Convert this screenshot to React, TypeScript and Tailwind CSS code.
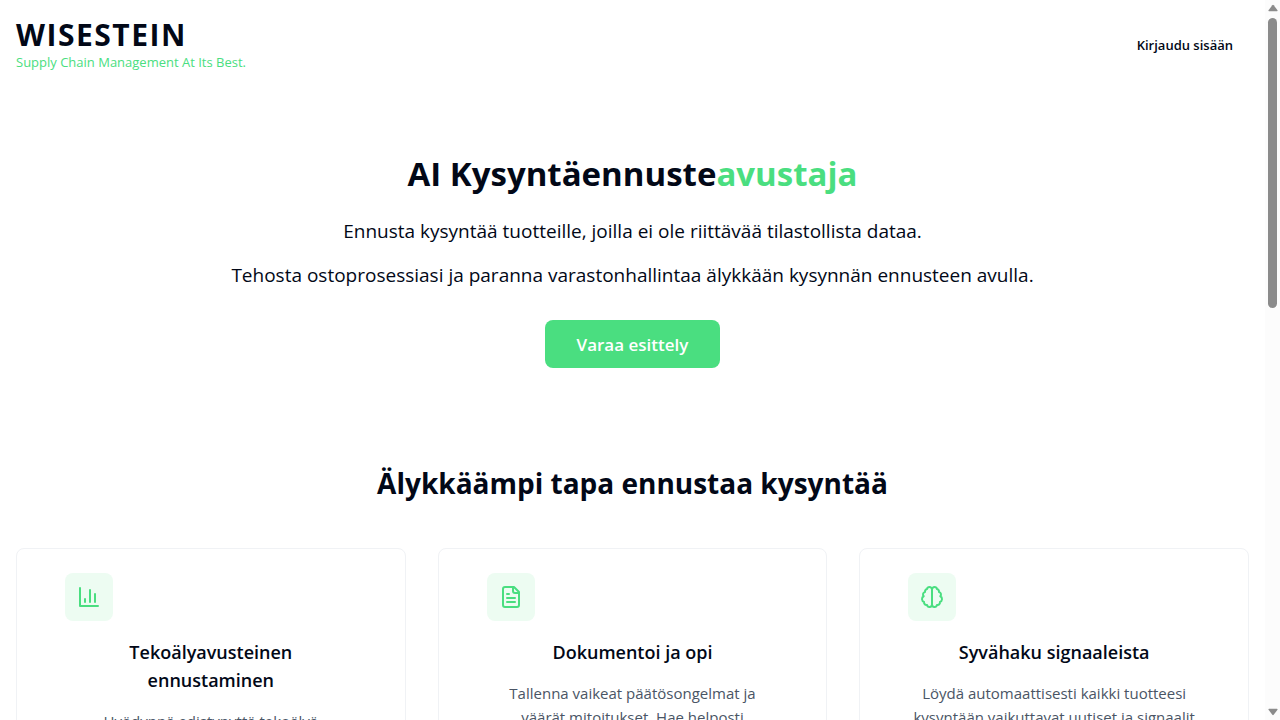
import type { ReactNode } from "react";

function Icon({ children }: { children: ReactNode }) {
  return (
    <svg className="size-6" viewBox="0 0 24 24" fill="none" stroke="currentColor" strokeWidth="2" strokeLinecap="round" strokeLinejoin="round" aria-hidden="true">
      {children}
    </svg>
  );
}

const features = [
  {
    icon: (
      <Icon>
        <path d="M3 3v18h18" />
        <path d="M18 17V9" />
        <path d="M13 17V5" />
        <path d="M8 17v-3" />
      </Icon>
    ),
    title: "Tekoälyavusteinen ennustaminen",
    text: "Hyödynnä edistynyttä tekoälyä",
  },
  {
    icon: (
      <Icon>
        <path d="M15 2H6a2 2 0 0 0-2 2v16a2 2 0 0 0 2 2h12a2 2 0 0 0 2-2V7Z" />
        <path d="M14 2v4a2 2 0 0 0 2 2h4" />
        <path d="M10 9H8" />
        <path d="M16 13H8" />
        <path d="M16 17H8" />
      </Icon>
    ),
    title: "Dokumentoi ja opi",
    text: "Tallenna vaikeat päätösongelmat ja väärät mitoitukset. Hae helposti",
  },
  {
    icon: (
      <Icon>
        <path d="M9.5 2A2.5 2.5 0 0 1 12 4.5v15a2.5 2.5 0 0 1-4.96.44 2.5 2.5 0 0 1-2.96-3.08 3 3 0 0 1-.34-5.58 2.5 2.5 0 0 1 1.32-4.24 2.5 2.5 0 0 1 1.98-3A2.5 2.5 0 0 1 9.5 2Z" />
        <path d="M14.5 2A2.5 2.5 0 0 0 12 4.5v15a2.5 2.5 0 0 0 4.96.44 2.5 2.5 0 0 0 2.96-3.08 3 3 0 0 0 .34-5.58 2.5 2.5 0 0 0-1.32-4.24 2.5 2.5 0 0 0-1.98-3A2.5 2.5 0 0 0 14.5 2Z" />
      </Icon>
    ),
    title: "Syvähaku signaaleista",
    text: "Löydä automaattisesti kaikki tuotteesi kysyntään vaikuttavat uutiset ja signaalit",
  },
];

function Scrollbar() {
  return (
    <div className="flex w-[15px] shrink-0 flex-col items-center bg-[#fcfcfc] py-1 text-[#8b8b8b]" aria-hidden="true">
      <svg className="h-2 w-[10px]" viewBox="0 0 10 8" fill="currentColor">
        <path d="M4.3 1.3Q5 .4 5.7 1.3L9.5 6.2Q9.9 7.2 9 7.2H1Q.1 7.2.5 6.2Z" />
      </svg>
      <div className="mt-[6px] flex min-h-0 w-[9px] flex-1 flex-col">
        <div className="h-[42%] rounded-full bg-[#8b8b8b]" />
      </div>
      <svg className="h-2 w-[10px] rotate-180" viewBox="0 0 10 8" fill="currentColor">
        <path d="M4.3 1.3Q5 .4 5.7 1.3L9.5 6.2Q9.9 7.2 9 7.2H1Q.1 7.2.5 6.2Z" />
      </svg>
    </div>
  );
}

export default function App() {
  return (
    <div className="flex h-screen overflow-hidden bg-white font-['Open_Sans',sans-serif] text-[#020817]">
      <div className="min-w-0 flex-1">
        <header className="flex items-center justify-between px-4 pt-[17px]">
          <div>
            <div className="text-[30px] leading-9 font-bold tracking-wider">WISESTEIN</div>
            <p className="text-[13px] leading-[18px] text-[#4ade80]">Supply Chain Management At Its Best.</p>
          </div>
          <button className="px-4 pt-0.5 text-[13px] leading-5 font-semibold">Kirjaudu sisään</button>
        </header>
        <main className="px-4 pt-[83px] text-center">
          <h1 className="text-[33px] leading-10 font-bold">
            AI Kysyntäennuste<span className="text-[#4ade80]">avustaja</span>
          </h1>
          <p className="mt-[23px] text-[19px] leading-7">Ennusta kysyntää tuotteille, joilla ei ole riittävää tilastollista dataa.</p>
          <p className="mt-4 text-[19px] leading-7">Tehosta ostoprosessiasi ja paranna varastonhallintaa älykkään kysynnän ennusteen avulla.</p>
          <button className="mt-[31px] h-12 rounded-lg bg-[#4ade80] px-8 pt-0.5 text-[17px] font-semibold text-white">Varaa esittely</button>
          <h2 className="mt-[97px] text-[28px] leading-9 font-bold">Älykkäämpi tapa ennustaa kysyntää</h2>
          <div className="mt-[47px] grid grid-cols-3 gap-8">
            {features.map(({ icon, title, text }) => (
              <article key={title} className="rounded-lg border border-[#f0f2f5] px-12 py-6">
                <div className="flex size-12 items-center justify-center rounded-lg bg-[#edfcf2] text-[#4ade80]">{icon}</div>
                <h3 className="mt-[17px] text-[18px] leading-7 font-semibold">{title}</h3>
                <p className="mt-[15px] text-[15px] leading-6 text-gray-600">{text}</p>
              </article>
            ))}
          </div>
        </main>
      </div>
      <Scrollbar />
    </div>
  );
}
